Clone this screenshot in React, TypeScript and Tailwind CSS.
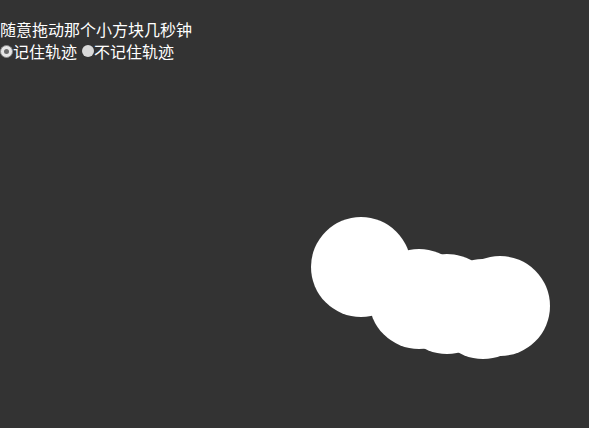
import React from "react";

const circles = [
  { left: 311, top: 217 },
  { left: 369, top: 249 },
  { left: 397, top: 254 },
  { left: 433, top: 259 },
  { left: 450, top: 256 },
];

export default function App() {
  return (
    <div
      className="relative w-[589px] h-[428px] overflow-hidden bg-[#333333] text-white text-[16px] leading-[22px] pt-[18px]"
      style={{ fontFamily: '"Noto Sans CJK SC", "Noto Sans", sans-serif' }}
    >
      <div>随意拖动那个小方块几秒钟</div>
      <div className="flex items-center">
        <span className="flex items-center justify-center w-[13px] h-[13px] rounded-full bg-[#e6e6e6] border border-[#8a8a8a]">
          <span className="w-[5px] h-[5px] rounded-full bg-[#6b6b6b]" />
        </span>
        <span>记住轨迹</span>
        <span className="ml-[5px] w-[12px] h-[12px] rounded-full bg-[#d9d9d9]" />
        <span>不记住轨迹</span>
      </div>
      {circles.map((c, i) => (
        <div
          key={i}
          className="absolute w-[100px] h-[100px] rounded-full bg-white"
          style={{ left: c.left, top: c.top }}
        />
      ))}
    </div>
  );
}
